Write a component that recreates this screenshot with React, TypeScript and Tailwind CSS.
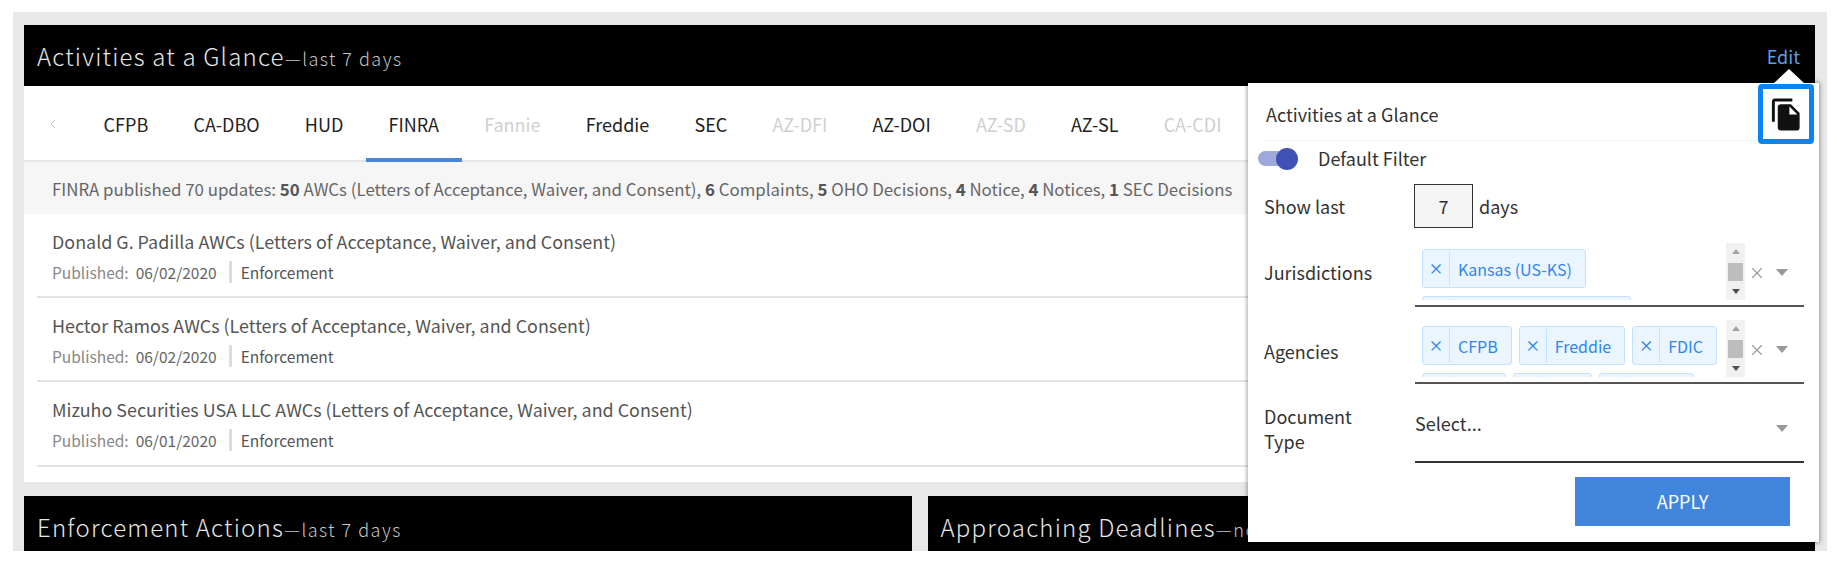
import { ChevronLeft, X } from 'lucide-react';

const TABS = [
  { label: 'CFPB' },
  { label: 'CA-DBO' },
  { label: 'HUD' },
  { label: 'FINRA', active: true },
  { label: 'Fannie', disabled: true },
  { label: 'Freddie' },
  { label: 'SEC' },
  { label: 'AZ-DFI', disabled: true },
  { label: 'AZ-DOI' },
  { label: 'AZ-SD', disabled: true },
  { label: 'AZ-SL' },
  { label: 'CA-CDI', disabled: true },
];

const ROWS = [
  { title: 'Donald G. Padilla AWCs (Letters of Acceptance, Waiver, and Consent)', date: '06/02/2020', height: 'h-[84px]' },
  { title: 'Hector Ramos AWCs (Letters of Acceptance, Waiver, and Consent)', date: '06/02/2020', height: 'h-[84px]' },
  { title: 'Mizuho Securities USA LLC AWCs (Letters of Acceptance, Waiver, and Consent)', date: '06/01/2020', height: 'h-[85px]' },
];

function PanelHeader({ title, sub }: { title: string; sub: string }) {
  return (
    <div className="h-[61px] bg-black flex items-center justify-between pl-[13px] pr-[15px]">
      <div className="text-[24px] font-light tracking-[1.2px] text-[#e6e6e6] whitespace-nowrap">
        {title}
        <span className="text-[18px] tracking-[1.5px] text-[#c8c8c8]">—{sub}</span>
      </div>
    </div>
  );
}

function Chip({ label }: { label: string }) {
  return (
    <div className="h-[39px] flex items-stretch bg-[#ebf5ff] border border-[#c2e0ff] rounded-[3px] text-[#2f86ee] text-[16px]">
      <span className="w-[27px] flex items-center justify-center border-r border-[#c2e0ff] my-[2px] text-[15px] font-medium">×</span>
      <span className="pl-[8px] pr-[13px] flex items-center whitespace-nowrap">{label}</span>
    </div>
  );
}

function ScrollTrack() {
  return (
    <div className="w-[19px] h-[57px] bg-[#f1f1f1] flex flex-col items-center justify-between py-[6px] shrink-0">
      <div className="w-0 h-0 border-x-[4px] border-x-transparent border-b-[5px] border-b-[#a3a3a3]" />
      <div className="w-[15px] h-[18px] bg-[#bdbdbd]" />
      <div className="w-0 h-0 border-x-[4px] border-x-transparent border-t-[5px] border-t-[#505050]" />
    </div>
  );
}

function Caret() {
  return <div className="w-0 h-0 border-x-[6px] border-x-transparent border-t-[7px] border-t-[#999999]" />;
}

function MultiField({ label, chips, labelClass }: { label: string; chips: string[]; labelClass: string }) {
  return (
    <div className="flex items-start">
      <div className={`w-[151px] text-[18px] leading-[28px] text-[#333333] ${labelClass}`}>{label}</div>
      <div className="w-[389px] h-[64px] border-b-2 border-[#555555] flex items-start pl-[7px] pr-[16px]">
        <div className="flex-1 h-[57px] overflow-hidden flex flex-wrap content-start gap-x-[7px] gap-y-[8px] pt-[6px]">
          {chips.map(c => (
            <Chip key={c} label={c} />
          ))}
        </div>
        <ScrollTrack />
        <div className="h-[59px] flex items-center">
          <X className="w-[18px] h-[18px] ml-[3px] text-[#999999]" strokeWidth={1.5} />
          <div className="ml-[10px]">
            <Caret />
          </div>
        </div>
      </div>
    </div>
  );
}

function FilterPopover() {
  return (
    <div className="absolute left-[1248px] top-[83px] w-[571px] h-[459px] bg-white shadow-[0_0_4px_1px_rgba(0,0,0,0.35)] pl-[16px]">
      <div className="absolute left-[526px] -top-[14px] w-0 h-0 border-x-[15px] border-x-transparent border-b-[14px] border-b-white" />
      <div className="absolute left-[510px] top-[1px] w-[56px] h-[60px] border-[5px] border-[#0a84f0] rounded-[4px] flex items-center justify-center bg-white">
        <svg viewBox="0 0 24 24" className="w-[35px] h-[35px]" fill="#111111">
          <path d="M16 1H4c-1.1 0-2 .9-2 2v14h2V3h12V1zm-1 4l6 6v10c0 1.1-.9 2-2 2H7.99C6.89 23 6 22.1 6 21l.01-14c0-1.1.89-2 1.99-2h7zm-1 7h5.5L14 6.5V12z" />
        </svg>
      </div>
      <div className="h-[58px] w-[495px] border-b border-[#f2f2f2] flex items-center text-[18px] text-[#333333] pl-[2px] pt-[5px]">
        Activities at a Glance
      </div>
      <div className="h-[35px] flex items-center -ml-[6px]">
        <div className="relative w-[40px] h-[22px] flex items-center">
          <div className="w-[36px] h-[15px] rounded-full bg-[#9fa8da]" />
          <div className="absolute right-0 w-[22px] h-[22px] rounded-full bg-[#3f51b5]" />
        </div>
        <span className="ml-[20px] text-[18px] text-[#333333]">Default Filter</span>
      </div>
      <div className="mt-[8px] h-[44px] flex items-center text-[18px] text-[#333333]">
        <div className="w-[150px]">Show last</div>
        <div className="w-[59px] h-[44px] bg-[#f5f5f5] border border-[#333333] flex items-center justify-center">7</div>
        <div className="ml-[6px]">days</div>
      </div>
      <div className="mt-[15px]">
        <MultiField label="Jurisdictions" labelClass="pt-[15px]" chips={['Kansas (US-KS)', 'Pennsylvania (US-PA)']} />
      </div>
      <div className="mt-[13px]">
        <MultiField label="Agencies" labelClass="pt-[17px]" chips={['CFPB', 'Freddie', 'FDIC', 'HUD', 'SEC', 'FINRA']} />
      </div>
      <div className="mt-[16px] flex items-start">
        <div className="w-[151px] text-[18px] leading-[25px] text-[#333333] pt-[4px]">
          Document
          <br />
          Type
        </div>
        <div className="w-[389px] h-[63px] border-b-2 border-[#333333] flex items-start justify-between pr-[16px] text-[18px] text-[#333333]">
          <span className="pt-[10px]">Select...</span>
          <div className="pt-[25px]">
            <Caret />
          </div>
        </div>
      </div>
      <div className="mt-[14px] ml-[311px] w-[215px] h-[49px] bg-[#4285dc] flex items-center justify-center text-white text-[18px]">
        APPLY
      </div>
    </div>
  );
}

export default function App() {
  return (
    <div
      className="relative w-[1837px] h-[563px] bg-white overflow-hidden"
      style={{ fontFamily: '"Noto Sans CJK KR", "Noto Sans", sans-serif' }}
    >
      <div className="ml-[13px] mr-[10px] mt-[12px] h-[539px] bg-[#e8e8e8] pl-[11px] pr-[12px] pt-[13px] overflow-hidden">
        <div className="h-[457px] bg-white relative">
          <PanelHeader title="Activities at a Glance" sub="last 7 days" />
          <div className="absolute right-[15px] top-[18px] text-[18px] text-[#5a9fe0]">Edit</div>
          <div className="h-[76px] shadow-[inset_0_-2px_0_#e6e6e6] flex items-stretch overflow-hidden">
            <div className="w-[57px] flex items-center justify-center text-[#c0c0c0]">
              <ChevronLeft className="w-[16px] h-[16px]" strokeWidth={1.5} />
            </div>
            {TABS.map(t => (
              <div
                key={t.label}
                className={`px-[22.6px] flex items-center text-[18px] whitespace-nowrap border-y-[4px] border-t-transparent ${
                  t.active ? 'border-b-[#4a86d8] text-[#222222]' : t.disabled ? 'border-b-transparent text-[#cfcfcf]' : 'border-b-transparent text-[#222222]'
                }`}
              >
                {t.label}
              </div>
            ))}
          </div>
          <div className="h-[52px] bg-[#f6f6f6] flex items-center pl-[28px] pt-[2px] text-[16.85px] text-[#666666] whitespace-nowrap">
            <span>
              FINRA published 70 updates: <b className="font-bold text-[#555555]">50</b> AWCs (Letters of Acceptance, Waiver, and Consent), <b className="font-bold text-[#555555]">6</b> Complaints, <b className="font-bold text-[#555555]">5</b> OHO Decisions, <b className="font-bold text-[#555555]">4</b> Notice, <b className="font-bold text-[#555555]">4</b> Notices, <b className="font-bold text-[#555555]">1</b> SEC Decisions
            </span>
          </div>
          <div className="mx-[13px]">
            {ROWS.map(r => (
              <div key={r.title} className={`${r.height} border-b-2 border-[#e2e2e2] px-[15px] pt-[13px]`}>
                <div className="text-[17.9px] leading-[28px] text-[#555555]">{r.title}</div>
                <div className="mt-[6px] flex items-center text-[15.5px] leading-[22px]">
                  <span className="text-[#888888]">Published:</span>
                  <span className="ml-[7px] text-[#666666]">{r.date}</span>
                  <span className="ml-[12px] mr-[9px] w-[3px] h-[22px] bg-[#dddddd]" />
                  <span className="text-[#555555]">Enforcement</span>
                </div>
              </div>
            ))}
          </div>
        </div>
        <div className="mt-[14px] grid grid-cols-2 gap-[16px]">
          <PanelHeader title="Enforcement Actions" sub="last 7 days" />
          <PanelHeader title="Approaching Deadlines" sub="next 7 days" />
        </div>
      </div>
      <FilterPopover />
    </div>
  );
}
